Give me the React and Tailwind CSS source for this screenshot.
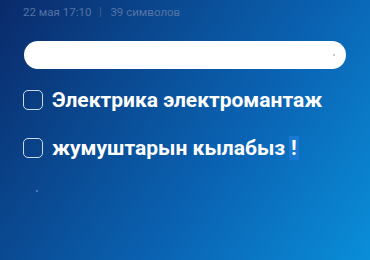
import React from 'react';

const Check = () => (
  <span className="w-[20px] h-[20px] rounded-[5px] border-[1.5px] border-[#c9d8ee] shrink-0" />
);

export default function App() {
  return (
    <div
      className="w-[370px] h-[260px] overflow-hidden bg-[linear-gradient(125deg,#0a2a6a_0%,#0a4a92_33%,#0a64b4_62%,#0a8ed8_100%)]"
      style={{ fontFamily: 'Roboto, "Noto Sans", sans-serif' }}
    >
      <div className="flex items-center pl-[23px] pt-[5px] text-[11.5px] text-[#5474a4] leading-[14px]">
        <span>22 мая 17:10</span>
        <span className="mx-[9px] w-px h-[10px] bg-[#36588c]" />
        <span>39 символов</span>
      </div>

      <div className="mx-[24px] mt-[22px] h-[28px] rounded-full bg-white flex items-center justify-end pr-[11px]">
        <span className="w-[2px] h-[2px] rounded-full bg-[#b8b8b8]" />
      </div>

      <div className="flex items-center gap-[9px] pl-[23px] mt-[20px] h-[21px]">
        <Check />
        <span className="text-white font-bold text-[21px] leading-[24px]">Электрика электромантаж</span>
      </div>

      <div className="flex items-center gap-[9px] pl-[23px] mt-[27px] h-[21px]">
        <Check />
        <span className="text-white font-bold text-[21px] leading-[24px]">
          жумуштарын кылабыз
          <span className="bg-[#1a78d2] ml-[4px] px-[2px]">!</span>
        </span>
      </div>

      <div className="ml-[36px] mt-[32px] w-[2px] h-[2px] bg-[#4d78b0]" />
    </div>
  );
}
